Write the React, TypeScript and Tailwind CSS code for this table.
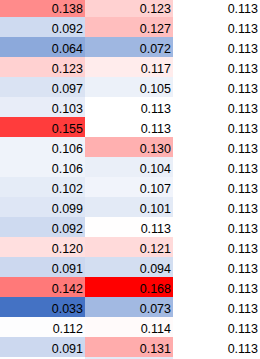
const MIN = 0.033
const MID = 0.113
const MAX = 0.168

const LOW = [68, 114, 196]
const HIGH = [255, 0, 0]

// three-colour scale: blue -> white -> red
function cellColor(v: number) {
  const from = [255, 255, 255]
  let to = from
  let t = 0
  if (v < MID) {
    to = LOW
    t = Math.min(1, (MID - v) / (MID - MIN))
  }
  else if (v > MID) {
    to = HIGH
    t = Math.min(1, (v - MID) / (MAX - MID))
  }
  const c = from.map((f, i) => Math.round(f + (to[i] - f) * t))
  return `rgb(${c[0]}, ${c[1]}, ${c[2]})`
}

const rows: [number, number, number][] = [
  [0.138, 0.123, 0.113],
  [0.092, 0.127, 0.113],
  [0.064, 0.072, 0.113],
  [0.123, 0.117, 0.113],
  [0.097, 0.105, 0.113],
  [0.103, 0.113, 0.113],
  [0.155, 0.113, 0.113],
  [0.106, 0.130, 0.113],
  [0.106, 0.104, 0.113],
  [0.102, 0.107, 0.113],
  [0.099, 0.101, 0.113],
  [0.092, 0.1132, 0.113],
  [0.120, 0.121, 0.113],
  [0.091, 0.094, 0.113],
  [0.142, 0.168, 0.113],
  [0.033, 0.073, 0.113],
  [0.112, 0.114, 0.113],
  [0.091, 0.131, 0.113],
]

// next row, only its top edge shows below the fold
const nextRow = [0.1125, 0.101, 0.113]

function Cell({ value, width, label = true }: { value: number, width: string, label?: boolean }) {
  return (
    <div
      className={`${width} h-5 shrink-0 pt-[4px] pr-[2px] text-right text-[12.5px] leading-[16px] text-black`}
      style={{ backgroundColor: cellColor(value) }}
    >
      {label ? value.toFixed(3) : null}
    </div>
  )
}

export default function App() {
  return (
    <div className="w-[260px] h-[359px] overflow-hidden bg-white" style={{ fontFamily: '"Liberation Sans", Arial, sans-serif' }}>
      <div className="-mt-[3px] flex flex-col">
        {rows.map((r, i) => (
          <div key={i} className="flex">
            <Cell value={r[0]} width="w-[85px]" />
            <Cell value={r[1]} width="w-[88px]" />
            <Cell value={r[2]} width="w-[87px]" />
          </div>
        ))}
        <div className="flex">
          <Cell value={nextRow[0]} width="w-[85px]" label={false} />
          <Cell value={nextRow[1]} width="w-[88px]" label={false} />
          <Cell value={nextRow[2]} width="w-[87px]" label={false} />
        </div>
      </div>
    </div>
  )
}
